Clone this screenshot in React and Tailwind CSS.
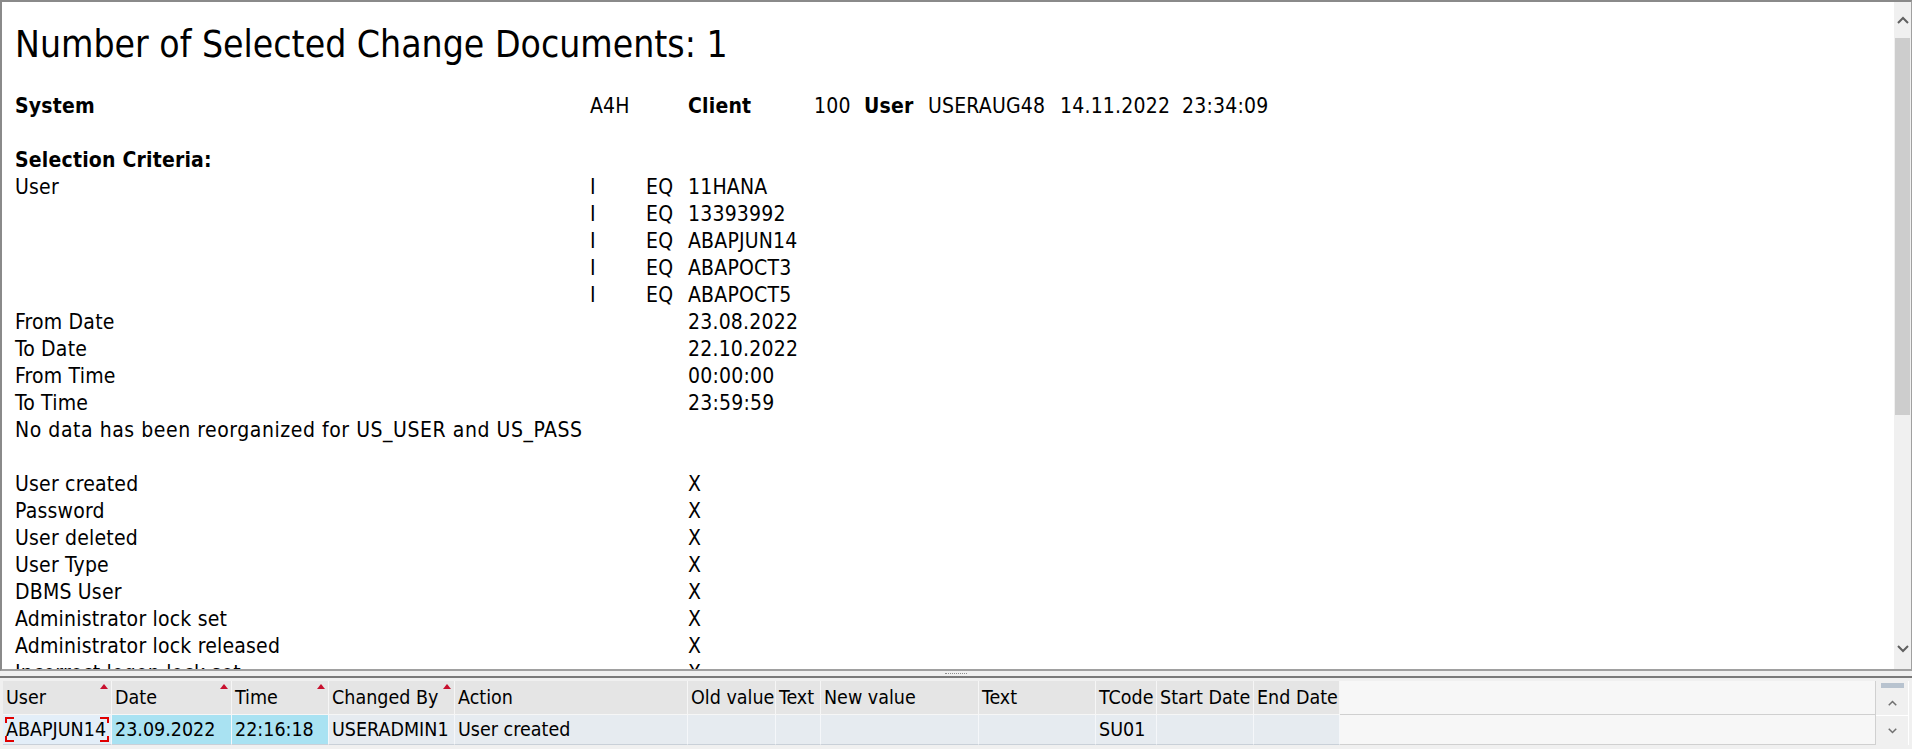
import React from 'react';

const criteria = [
  ['User', 'I', 'EQ', '11HANA'],
  ['', 'I', 'EQ', '13393992'],
  ['', 'I', 'EQ', 'ABAPJUN14'],
  ['', 'I', 'EQ', 'ABAPOCT3'],
  ['', 'I', 'EQ', 'ABAPOCT5'],
];

const ranges = [
  ['From Date', '23.08.2022'],
  ['To Date', '22.10.2022'],
  ['From Time', '00:00:00'],
  ['To Time', '23:59:59'],
];

const flags = [
  'User created',
  'Password',
  'User deleted',
  'User Type',
  'DBMS User',
  'Administrator lock set',
  'Administrator lock released',
  'Incorrect logon lock set',
];

// grid columns: label, width, sorted, cell colour
const columns = [
  { label: 'User', w: 'w-[109px]', sort: true, cell: 'bg-[#e3eef8]', value: 'ABAPJUN14', focus: true },
  { label: 'Date', w: 'w-[120px]', sort: true, cell: 'bg-[#a9e2f2]', value: '23.09.2022' },
  { label: 'Time', w: 'w-[97px]', sort: true, cell: 'bg-[#a9e2f2]', value: '22:16:18' },
  { label: 'Changed By', w: 'w-[126px]', sort: true, cell: 'bg-[#e6ebf0]', value: 'USERADMIN1' },
  { label: 'Action', w: 'w-[233px]', cell: 'bg-[#e6ebf0]', value: 'User created' },
  { label: 'Old value', w: 'w-[88px]', cell: 'bg-[#e6ebf0]', value: '' },
  { label: 'Text', w: 'w-[45px]', cell: 'bg-[#e6ebf0]', value: '' },
  { label: 'New value', w: 'w-[158px]', cell: 'bg-[#e6ebf0]', value: '' },
  { label: 'Text', w: 'w-[117px]', cell: 'bg-[#e6ebf0]', value: '' },
  { label: 'TCode', w: 'w-[61px]', cell: 'bg-[#e6ebf0]', value: 'SU01' },
  { label: 'Start Date', w: 'w-[97px]', cell: 'bg-[#e6ebf0]', value: '' },
  { label: 'End Date', w: 'w-[86px]', cell: 'bg-[#e6ebf0]', value: '' },
];

function Chevron({ up, className }) {
  return (
    <svg width="12" height="8" viewBox="0 0 12 8" className={className}>
      <path d={up ? 'M1 7 L6 2 L11 7' : 'M1 1 L6 6 L11 1'} fill="none" stroke="currentColor" strokeWidth="2" />
    </svg>
  );
}

function Row({ children, className = '' }) {
  return <div className={`flex h-[27px] items-center whitespace-nowrap ${className}`}>{children}</div>;
}

export default function App() {
  return (
    <div className="w-[1912px] h-[749px] flex flex-col bg-[#f0f0f0] text-black font-['DejaVu_Sans_Condensed','DejaVu_Sans',sans-serif] overflow-hidden">
      {/* list output */}
      <div className="h-[671px] border-t-2 border-l-2 border-r border-b-2 border-t-[#8a8a8a] border-l-[#8a8a8a] border-r-[#a0a0a0] border-b-[#a0a0a0] flex bg-white">
        <div className="flex-1 overflow-hidden pl-[13px] text-[21px] tracking-[0.2px]">
          <div className="mt-[20px] h-[46px] leading-[46px] text-[37px] tracking-normal whitespace-nowrap">Number of Selected Change Documents: 1</div>
          <div className="mt-[25px]">
            <Row>
              <span className="w-[575px] font-bold">System</span>
              <span className="w-[98px]">A4H</span>
              <span className="w-[126px] font-bold">Client</span>
              <span className="w-[50px]">100</span>
              <span className="w-[64px] font-bold">User</span>
              <span className="w-[132px]">USERAUG48</span>
              <span className="w-[122px]">14.11.2022</span>
              <span>23:34:09</span>
            </Row>
            <Row />
            <Row>
              <span className="font-bold">Selection Criteria:</span>
            </Row>
            {criteria.map(([label, sign, opt, val], i) => (
              <Row key={i}>
                <span className="w-[575px]">{label}</span>
                <span className="w-[56px]">{sign}</span>
                <span className="w-[42px]">{opt}</span>
                <span>{val}</span>
              </Row>
            ))}
            {ranges.map(([label, val]) => (
              <Row key={label}>
                <span className="w-[673px]">{label}</span>
                <span>{val}</span>
              </Row>
            ))}
            <Row className="tracking-[0.55px]">No data has been reorganized for US_USER and US_PASS</Row>
            <Row />
            {flags.map((f) => (
              <Row key={f}>
                <span className="w-[673px]">{f}</span>
                <span>X</span>
              </Row>
            ))}
          </div>
        </div>
        {/* vertical scrollbar */}
        <div className="w-[17px] bg-[#f0f0f0] flex flex-col items-center">
          <div className="h-[36px] flex items-center justify-center text-[#606060]">
            <Chevron up />
          </div>
          <div className="w-[15px] h-[377px] bg-[#cdcdcd]" />
          <div className="flex-1" />
          <div className="h-[40px] flex items-center justify-center text-[#606060]">
            <Chevron />
          </div>
        </div>
      </div>

      {/* splitter */}
      <div className="h-[5px] flex justify-center items-center">
        <span className="w-[22px] border-t border-dotted border-[#8c8c8c]" />
      </div>
      <div className="h-[2px] bg-[#7a7a7a]" />

      {/* ALV grid */}
      <div className="flex-1 flex pl-[3px] pt-[3px] pr-[3px] pb-[4px] text-[19.5px] whitespace-nowrap">
        <div className="flex">
          {columns.map((c, i) => (
            <div key={i} className={`${c.w} flex flex-col`}>
              <div className="relative h-[34px] bg-[#e5e5e5] border-r border-b border-r-[#f6f6f6] border-b-[#f6f6f6] pl-[3px] flex items-center overflow-hidden">
                {c.label}
                {c.sort && (
                  <span className="absolute right-[3px] top-[3px] w-0 h-0 border-l-[4px] border-r-[4px] border-b-[5px] border-l-transparent border-r-transparent border-b-[#c8102e]" />
                )}
              </div>
              <div className={`relative h-[30px] ${c.cell} border-r border-b border-r-[#f5f7fa] border-b-[#c9d0d8] pl-[3px] flex items-center overflow-hidden`}>
                {c.value}
                {c.focus && (
                  <>
                    <span className="absolute left-[2px] top-[2px] w-[9px] h-[6px] border-l-2 border-t-2 border-[#e00000]" />
                    <span className="absolute right-[2px] top-[2px] w-[9px] h-[6px] border-r-2 border-t-2 border-[#e00000]" />
                    <span className="absolute left-[2px] bottom-[2px] w-[9px] h-[6px] border-l-2 border-b-2 border-[#e00000]" />
                    <span className="absolute right-[2px] bottom-[2px] w-[9px] h-[6px] border-r-2 border-b-2 border-[#e00000]" />
                  </>
                )}
              </div>
            </div>
          ))}
        </div>
        <div className="flex-1 flex flex-col bg-[#f7f7f7] border-r border-[#d0d0d0]">
          <div className="h-[34px] border-b border-[#d0d0d0]" />
          <div className="h-[30px] border-b border-[#d0d0d0]" />
        </div>
        <div className="w-[33px] flex flex-col bg-[#f0f0f0] border-r border-white">
          <div className="h-[9px] flex items-center justify-center">
            <span className="w-[23px] h-[5px] bg-[#b8c3cf]" />
          </div>
          <div className="h-[26px] flex items-center justify-center text-[#707070] border-b border-white">
            <Chevron up className="w-[9px] h-[6px]" />
          </div>
          <div className="h-[29px] flex items-center justify-center text-[#707070]">
            <Chevron className="w-[9px] h-[6px]" />
          </div>
        </div>
      </div>
    </div>
  );
}
